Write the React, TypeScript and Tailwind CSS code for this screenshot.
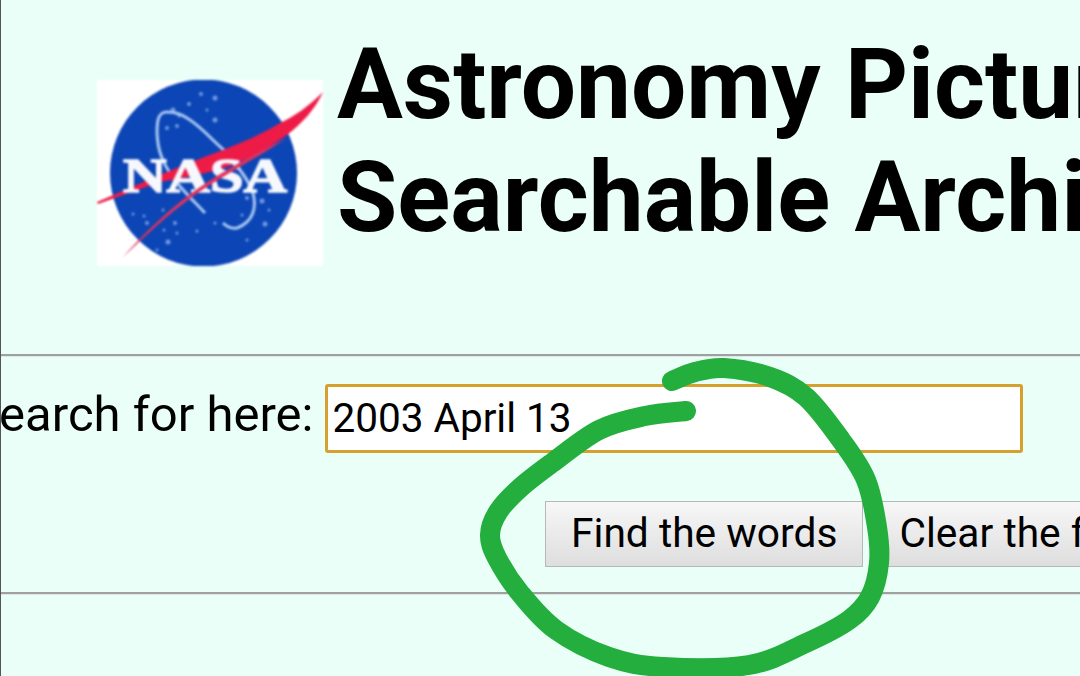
const stars = [
  [104, 14, 2], [118, 18, 2.5], [92, 24, 2], [110, 30, 1.5], [76, 30, 2.5], [82, 36, 1.5], [118, 40, 2.5],
  [70, 48, 2], [80, 46, 2], [178, 100, 1.5], [150, 118, 2], [165, 121, 2.5], [172, 130, 1.5], [168, 144, 2.5],
  [145, 135, 1.5], [47, 136, 1.5], [36, 134, 1.5], [50, 143, 2], [66, 130, 1.5], [78, 143, 2], [67, 150, 1.5],
  [80, 153, 1.5], [71, 162, 2.5], [100, 151, 1.5], [118, 143, 1.5], [150, 160, 1.5], [60, 170, 1.5],
];

// points along the marker stroke, smoothed into a curve below
const marker = [
  [672, 381], [695, 372], [724, 368], [770, 377], [806, 397], [841, 440], [866, 480], [877, 527], [879, 563],
  [870, 597], [849, 620], [806, 643], [749, 665], [663, 667], [609, 657], [556, 630], [520, 593], [497, 558],
  [490, 535], [498, 512], [520, 488], [552, 463], [599, 430], [645, 416], [686, 411],
];

function smoothPath(pts: number[][]) {
  let d = `M${pts[0][0]} ${pts[0][1]}`;
  for (let i = 0; i < pts.length - 1; i++) {
    const p0 = pts[Math.max(i - 1, 0)];
    const p1 = pts[i];
    const p2 = pts[i + 1];
    const p3 = pts[Math.min(i + 2, pts.length - 1)];
    d += `C${p1[0] + (p2[0] - p0[0]) / 6} ${p1[1] + (p2[1] - p0[1]) / 6} ${p2[0] - (p3[0] - p1[0]) / 6} ${p2[1] - (p3[1] - p1[1]) / 6} ${p2[0]} ${p2[1]}`;
  }
  return d;
}

function NasaLogo() {
  return (
    <svg viewBox="0 0 226 186" className="h-[186px] w-[226px] shrink-0 bg-white blur-[0.8px]">
      <circle cx="106.5" cy="93" r="93.5" fill="#0C46B6" />
      {stars.map(([x, y, r]) => (
        <circle key={`${x}-${y}`} cx={x} cy={y} r={r} fill="#6F9AE2" />
      ))}
      <path
        d="M108 133C94 118 74 100 66 80C60 68 59 50 61 40C63 33 66 32 70 32C78 32 84 34 90 38C100 44 108 52 116 60C122 66 126 69 130 73C140 86 152 100 156 113C160 128 156 142 140 148C134 149 130 147 126 143"
        fill="none"
        stroke="#A9C7F2"
        strokeWidth="3"
      />
      <path d="M226 12C212 26 198 36 183 43C165 54 146 62 126 70C104 78 84 86 63 95L0 122L1 124L63 102C86 98 108 94 130 87C152 78 172 68 190 55C204 44 218 30 226 12Z" fill="#EE1B47" />
      <text
        x="26"
        y="112"
        textLength="164"
        lengthAdjust="spacingAndGlyphs"
        fill="#F6F8FD"
        stroke="#F6F8FD"
        strokeWidth="1.6"
        className="font-['Liberation_Serif',serif] text-[49px] font-bold"
      >
        NASA
      </text>
      <path d="M190 58C150 84 110 104 86 124C62 142 42 162 26 177C50 150 72 130 96 112C124 92 160 72 190 58Z" fill="#E0335C" />
    </svg>
  );
}

export default function App() {
  return (
    <div className="relative h-[676px] w-[1080px] overflow-hidden border-l border-[#555555] bg-[#E9FFF7] font-['Roboto',sans-serif] text-black">
      <header className="flex h-[354px] items-start pl-[96px]">
        <div className="pt-[80px]">
          <NasaLogo />
        </div>
        <h1 className="whitespace-nowrap pl-[14px] pt-[28px] text-[98px] font-bold leading-[113px]">
          Astronomy Picture of the Day
          <br />
          Searchable Archive
        </h1>
      </header>

      <hr className="border-t-2 border-b border-t-[#A0A0A0] border-b-[#DDE8E4]" />

      <form>
        <div className="flex h-[124px] items-start pt-[27px]">
          <label className="ml-[-31px] whitespace-nowrap text-[49px] leading-[62px]">Search for here:</label>
          <input
            readOnly
            value="2003 April 13"
            className="ml-[12px] h-[69px] w-[698px] shrink-0 rounded-[3px] border-[3px] border-[#D6A02E] bg-white px-[4px] pb-[2px] text-[40.5px] outline-none"
          />
        </div>
        <div className="flex h-[111px] items-start gap-[10px] pl-[544px] pt-[20px]">
          <button
            type="button"
            className="h-[66px] shrink-0 whitespace-nowrap border border-[#B4B8B6] bg-gradient-to-b from-[#F7F7F7] to-[#DEDEDE] px-[25px] text-[40.7px]"
          >
            Find the words
          </button>
          <button
            type="button"
            className="h-[66px] shrink-0 whitespace-nowrap border border-[#B4B8B6] bg-gradient-to-b from-[#F7F7F7] to-[#DEDEDE] px-[25px] text-[40.7px]"
          >
            Clear the form
          </button>
        </div>
      </form>

      <hr className="border-t-2 border-b border-t-[#A0A0A0] border-b-[#DDE8E4]" />

      {/* marker circle drawn over the page */}
      <svg viewBox="0 0 1080 676" className="pointer-events-none absolute left-[-1px] top-0 h-[676px] w-[1080px]">
        <path
          d={smoothPath(marker)}
          fill="none"
          stroke="#23AE3E"
          strokeWidth="20"
          strokeLinecap="round"
          strokeLinejoin="round"
        />
      </svg>
    </div>
  );
}
